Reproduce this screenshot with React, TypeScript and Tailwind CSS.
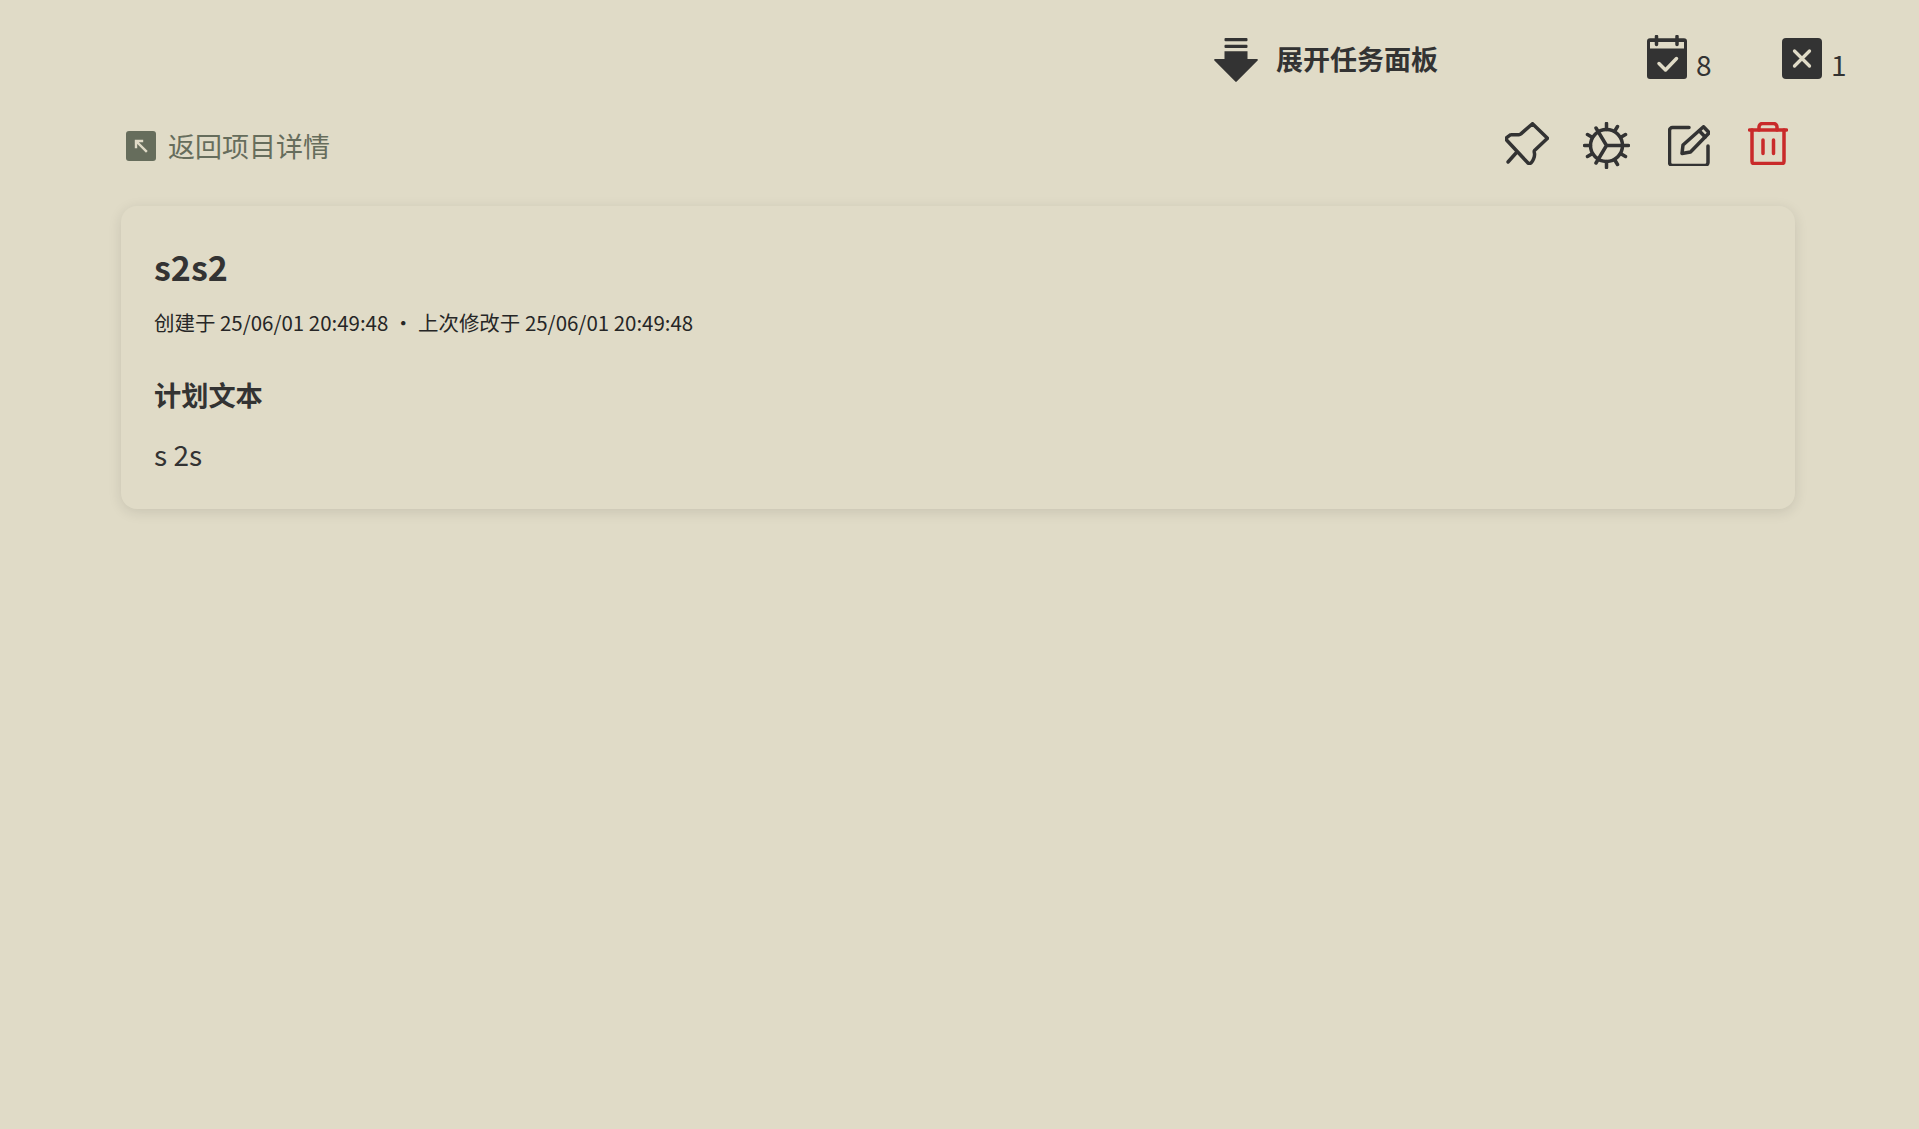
import React from 'react';

const font = "font-['Noto_Sans_CJK_SC','Noto_Sans',sans-serif]";

const ExpandIcon = () => (
  <svg width="44" height="44" viewBox="0 0 44 44" fill="#333333">
    <rect x="10.500" y="0" width="23" height="3.300" rx="1" />
    <rect x="10.500" y="6.700" width="23" height="3.300" rx="1" />
    <path d="M10.500 13.300h23V21H43c.8 0 1.200 1 .6 1.600L22.700 43.600c-.4.400-1 .4-1.400 0L.4 22.600c-.6-.6-.2-1.600.6-1.600h9.500z" />
  </svg>
);

const CalendarIcon = () => (
  <svg width="40" height="44" viewBox="0 0 40 44">
    <path d="M3 3.300h34a3 3 0 0 1 3 3V41a3 3 0 0 1-3 3H3a3 3 0 0 1-3-3V6.300a3 3 0 0 1 3-3z" fill="#333333" />
    <rect x="3" y="7" width="34" height="6.500" fill="#e0dbc7" />
    <path d="M9.500 1.500v8M30 1.500v8" stroke="#333333" strokeWidth="3.500" strokeLinecap="round" />
    <path d="M12 28.500l6.500 6.500 11-11.500" fill="none" stroke="#e0dbc7" strokeWidth="3.500" strokeLinecap="round" strokeLinejoin="round" />
  </svg>
);

const CloseIcon = () => (
  <svg width="40" height="41" viewBox="0 0 40 41">
    <rect width="40" height="41" rx="4" fill="#333333" />
    <path d="M12.500 13l15 15M27.500 13l-15 15" stroke="#e0dbc7" strokeWidth="3.300" strokeLinecap="round" />
  </svg>
);

const PinIcon = () => (
  <svg width="44" height="43" viewBox="0 0 44 43" fill="none" stroke="#333333" strokeWidth="3.500" strokeLinecap="round" strokeLinejoin="round">
    <path d="M27.500 1.700l15 14.500L29.500 28.500c-.6.6-.4 1.500 0 3 .5 3-1.800 8-3.500 9.500-1 .8-2.200.6-3 0L2 18.500c-1-1-.8-2.500 0-3.200l3-2.200c.5-.3 1-.4 1.500-.4H14c.6 0 1.200-.2 1.600-.6z" />
    <path d="M11.500 30.500L3 40" />
  </svg>
);

const GearIcon = () => (
  <svg width="47" height="47" viewBox="0 0 47 47" fill="none" stroke="#333333" strokeWidth="3.500" strokeLinecap="round">
    <circle cx="23.500" cy="23.500" r="16" />
    <path d="M23.500 23.500H45.500M23.500 23.500L13 6M23.500 23.500L13 41" />
    <path d="M23.500 1.500v6M23.500 39.500v6M1.500 23.500h6M34.500 4.500l-3 5M34.500 42.500l-3-5M4.500 12.500l5 3M42.500 12.500l-5 3M4.500 34.500l5-3M42.500 34.500l-5-3" />
  </svg>
);

const EditIcon = () => (
  <svg width="42" height="41" viewBox="0 0 42 41" fill="none" stroke="#333333" strokeWidth="3.500" strokeLinecap="round" strokeLinejoin="round">
    <path d="M21 2.500H4.500a3 3 0 0 0-3 3v32a3 3 0 0 0 3 3H37a3 3 0 0 0 3-3V21" />
    <path d="M35.500 1.800l5.700 6L22.500 27l-8.500 1.500 1-8.500z" />
    <path d="M31.500 6l5.700 6" />
  </svg>
);

const TrashIcon = () => (
  <svg width="40" height="43" viewBox="0 0 40 43" fill="none" stroke="#c92a2a" strokeWidth="3.500" strokeLinecap="round" strokeLinejoin="round">
    <path d="M1.500 8h37" />
    <path d="M4 8v31.500a2 2 0 0 0 2 2h28a2 2 0 0 0 2-2V8" />
    <path d="M11 8V5a3.500 3.500 0 0 1 3.500-3.500h11A3.500 3.500 0 0 1 29 5v3" />
    <path d="M15 18v13.500M25.500 18v13.500" />
  </svg>
);

const BackIcon = () => (
  <div className="w-[30px] h-[30px] rounded-[3px] bg-[#666d5c] flex items-center justify-center">
    <svg width="14" height="14" viewBox="0 0 14 14" fill="none" stroke="#e0dbc7" strokeWidth="2.400" strokeLinecap="square">
      <path d="M2 8V2h6M2.500 2.500L12 12" />
    </svg>
  </div>
);

export default function App() {
  return (
    <div className={`${font} min-h-[1129px] bg-[#e0dbc7] text-[#333333]`}>
      {/* top bar */}
      <div className="h-[112px] flex items-start pt-[35px]">
        <div className="ml-[1214px] mt-[3px] w-[224px] flex items-center gap-[18px]">
          <ExpandIcon />
          <span className="text-[27px] font-bold leading-[40px] -mt-[2px] whitespace-nowrap">展开任务面板</span>
        </div>
        <div className="ml-[209px] w-[135px] flex items-start">
          <CalendarIcon />
          <span className="ml-[9px] mt-[10px] text-[28px] leading-[38px]">8</span>
        </div>
        <div className="mt-[3px] flex items-start">
          <CloseIcon />
          <span className="ml-[9px] mt-[7px] text-[28px] leading-[38px]">1</span>
        </div>
      </div>
      {/* back link + actions */}
      <div className="ml-[126px] w-[1662px] h-[68px] mb-[26px] flex justify-between items-center">
        <div className="flex items-center gap-[12px]">
          <BackIcon />
          <span className="text-[27px] leading-[40px] text-[#666d5c]">返回项目详情</span>
        </div>
        <div className="flex items-center gap-[38px]">
          <div className="-mt-[6px]"><PinIcon /></div>
          <div className="-ml-[4px] -mt-[2px]"><GearIcon /></div>
          <div className="-mt-[2px]"><EditIcon /></div>
          <div className="-mt-[6px]"><TrashIcon /></div>
        </div>
      </div>
      {/* note card */}
      <div className="ml-[121px] w-[1674px] h-[303px] rounded-[16px] bg-[#e0dbc7] shadow-[0_3px_14px_rgba(0,0,0,0.11)] px-[33px] pt-[35px]">
        <h1 className="text-[34px] font-bold leading-[52px]">s2s2</h1>
        <p className="mt-[13px] text-[20.480px] leading-[32px] whitespace-pre text-[#262626]">创建于 25/06/01 20:49:48 • 上次修改于 25/06/01 20:49:48</p>
        <h2 className="mt-[36px] text-[27.200px] font-bold leading-[40px]">计划文本</h2>
        <p className="mt-[20px] text-[28px] leading-[40px]">s 2s</p>
      </div>
    </div>
  );
}
